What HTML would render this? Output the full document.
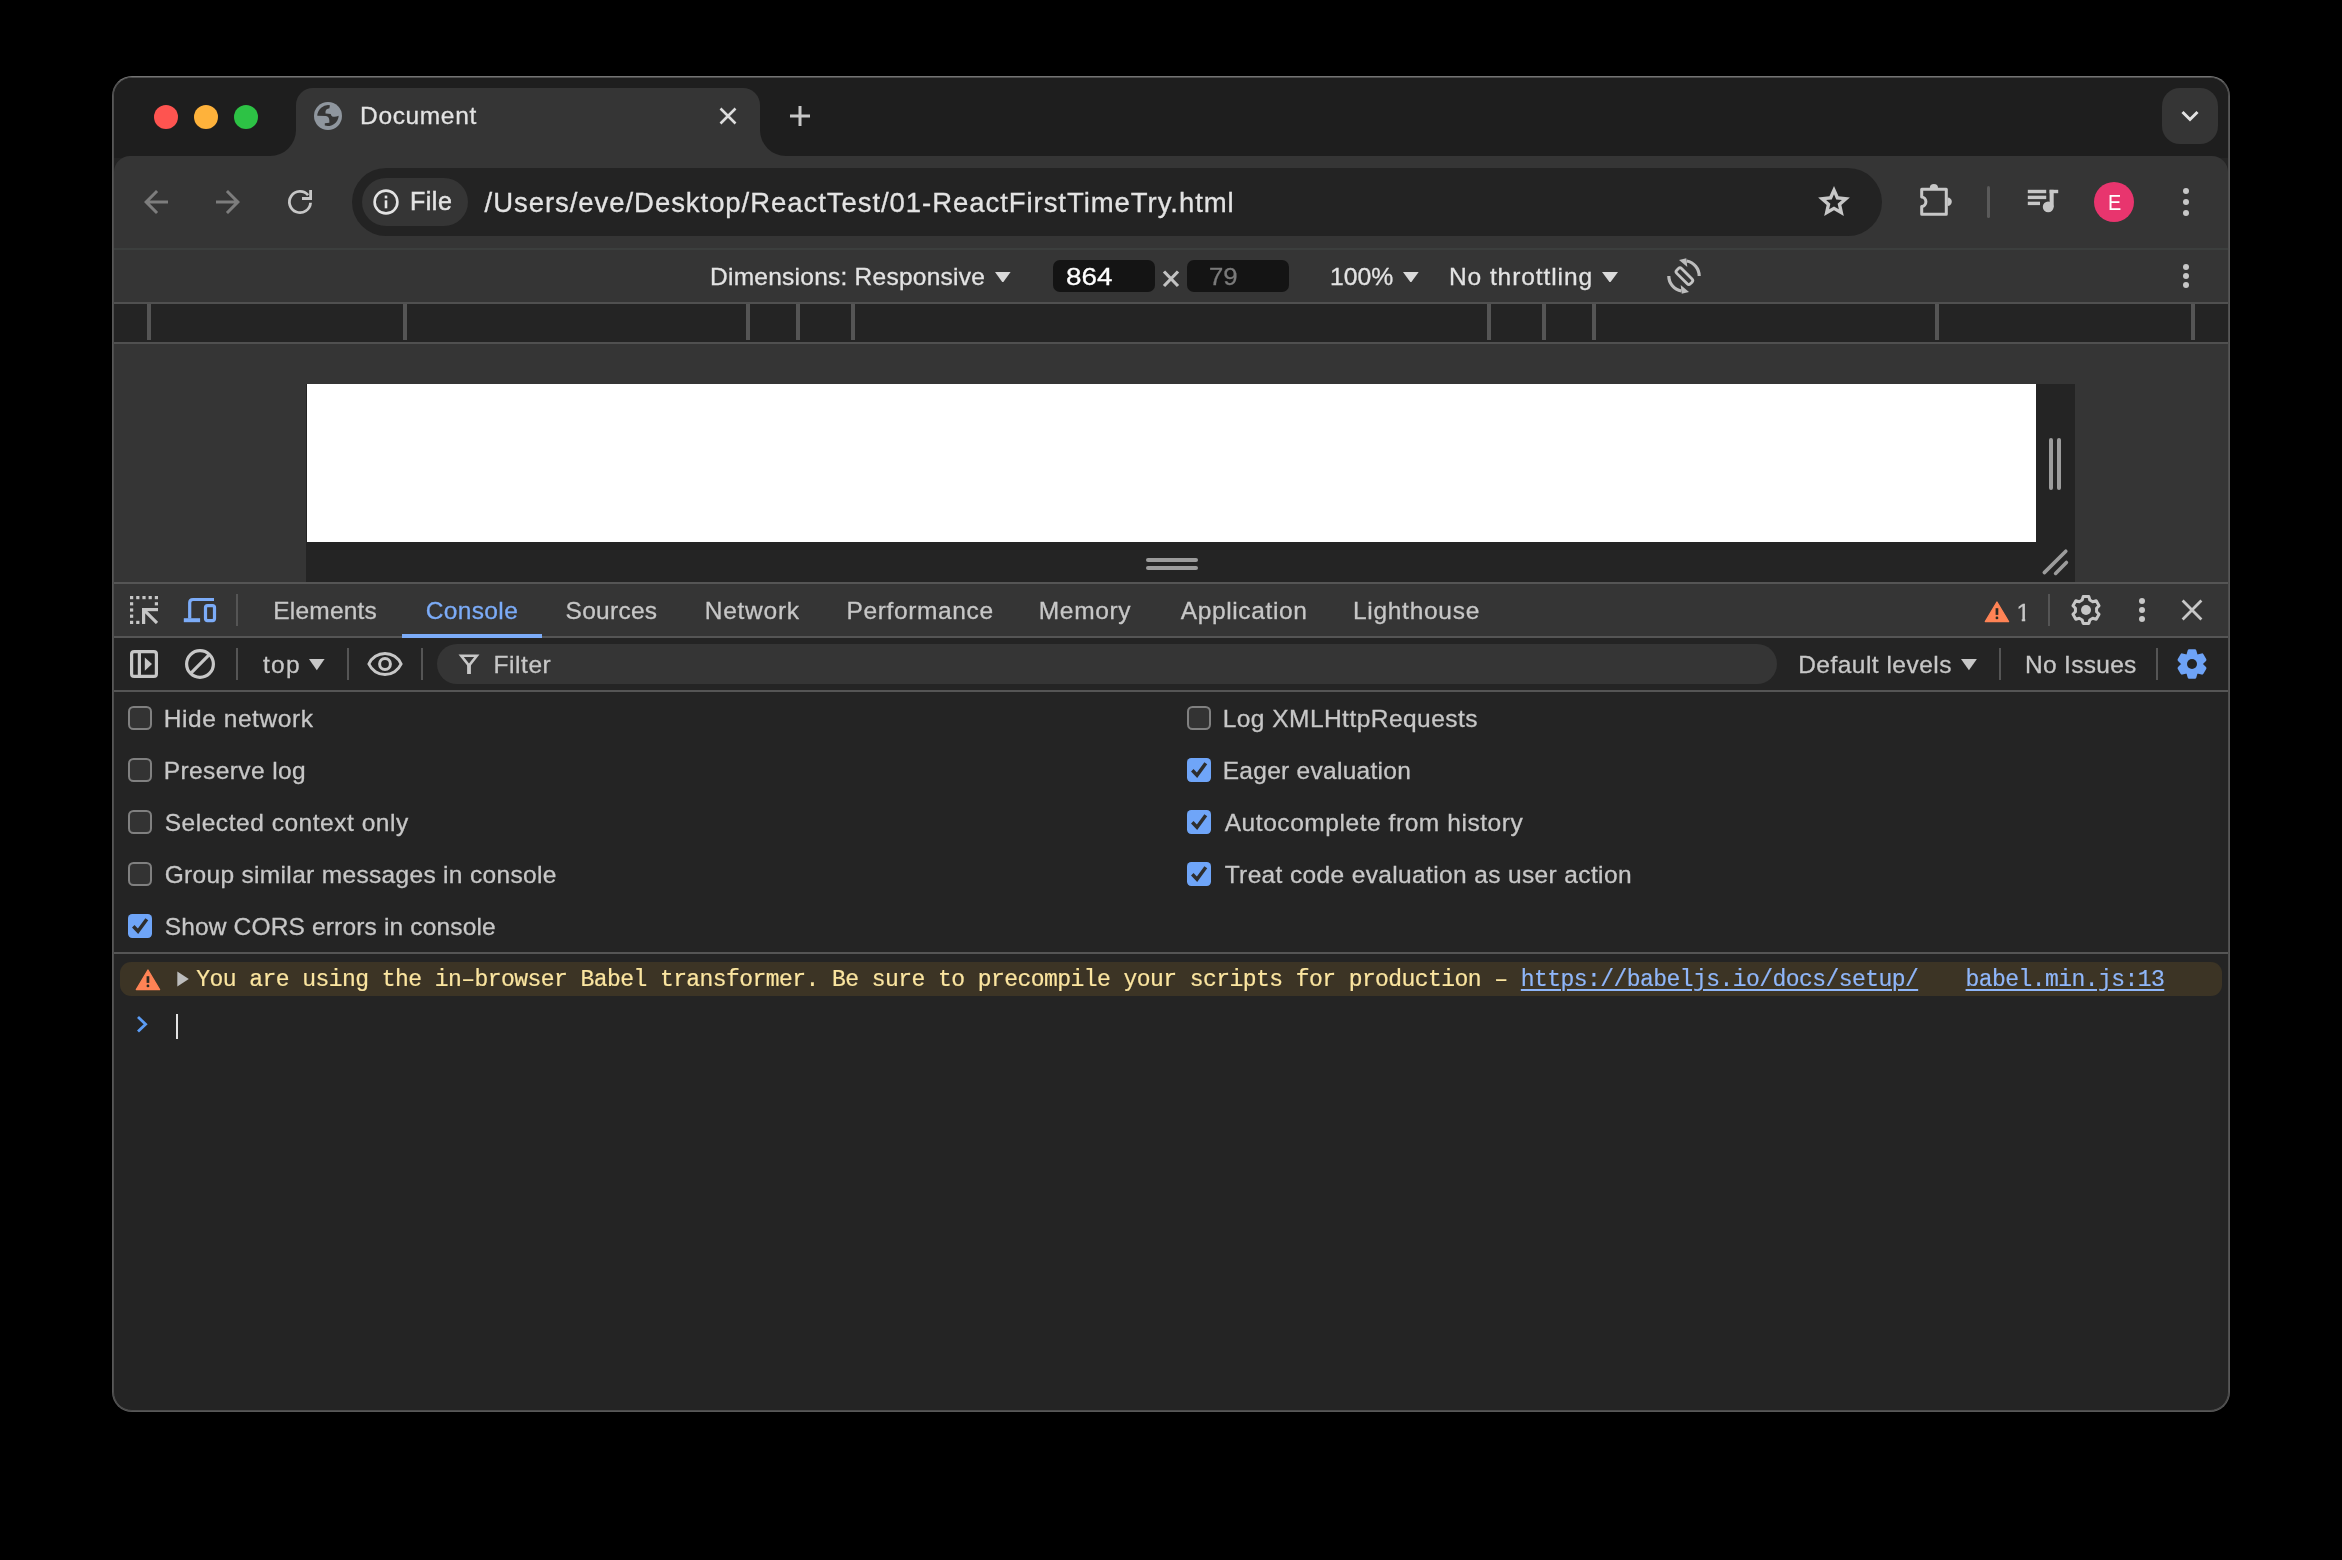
<!DOCTYPE html>
<html lang="en"><head><meta charset="utf-8"><title>Document</title>
<style>
html,body{margin:0;padding:0;background:#000;}
body{width:2342px;height:1560px;position:relative;overflow:hidden;font-family:"Liberation Sans", sans-serif;}
#win{position:absolute;left:112px;top:76px;width:2118px;height:1336px;box-sizing:border-box;border:1px solid #585858;border-top-color:#747474;border-radius:20px;overflow:hidden;background:#4d4d4d;}
#win2{position:absolute;left:0;top:0;right:0;bottom:0;box-sizing:border-box;border:1px solid #4d4d4d;border-radius:19px;overflow:hidden;background:#242424;}
#pg{will-change:transform;position:absolute;left:-114px;top:-78px;width:2342px;height:1560px;}
#pg div,#pg svg,#pg span{position:absolute;display:block;}
.t{line-height:1;white-space:pre;-webkit-text-stroke:0.3px currentColor;}
.s{font-family:"Liberation Sans", sans-serif;}
.m{font-family:"Liberation Mono", monospace;}
</style></head><body>
<div id="win"><div id="win2"><div id="pg">
<div style="left:112px;top:76px;width:2118px;height:82px;background:#1e1e1e;"></div>
<div style="left:114px;top:156px;width:2114px;height:94px;background:#353535;border-radius:16px 16px 0 0;"></div>
<svg style="left:260px;top:88px;" width="540" height="68" viewBox="260 88 540 68"><path fill="#353535" d="M270 156 A26 26 0 0 0 296 130 V105 A17 17 0 0 1 313 88 H743 A17 17 0 0 1 760 105 V130 A26 26 0 0 0 786 156 Z"/></svg>
<div style="left:154px;top:105px;width:24px;height:24px;background:#fe5450;border-radius:50%;"></div>
<div style="left:194px;top:105px;width:24px;height:24px;background:#feb23b;border-radius:50%;"></div>
<div style="left:234px;top:105px;width:24px;height:24px;background:#2dc245;border-radius:50%;"></div>
<svg style="left:314px;top:102px;" width="28" height="28" viewBox="0 0 28 28"><circle cx="14" cy="14" r="14" fill="#8f969e"/><path fill="#353535" d="M15.9 3.2 A10.9 10.9 0 0 0 3.3 13.8 L12 14 Q15 14.6 15.3 18 L15.4 20.8 L10.8 21.2 L10.8 23.6 A10.9 10.9 0 0 0 24.7 13.8 Q21 15.5 18.2 14.4 Q16.8 13.5 16.7 12 L11.5 11.6 L11.5 9.5 Q12 6.8 15.4 6.2 Z"/></svg>
<svg style="left:718px;top:106px;" width="20" height="20" viewBox="0 0 20 20"><path d="M2.5 2.5 L17.5 17.5 M17.5 2.5 L2.5 17.5" stroke="#dcdcdc" stroke-width="2.6" fill="none"/></svg>
<svg style="left:788px;top:104px;" width="24" height="24" viewBox="0 0 24 24"><path d="M12 2 V22 M2 12 H22" stroke="#c7c7c7" stroke-width="3" fill="none"/></svg>
<div style="left:2162px;top:88px;width:56px;height:56px;background:#353535;border-radius:18px;"></div>
<svg style="left:2178px;top:104px;" width="24" height="24" viewBox="0 0 24 24"><path d="M4.5 8 L12 15.5 L19.5 8" stroke="#e3e3e3" stroke-width="3" fill="none"/></svg>
<svg style="left:138px;top:184px;" width="36" height="36" viewBox="0 0 24 24"><path fill="#7d7d7d" d="M20 11H7.83l5.59-5.59L12 4l-8 8 8 8 1.41-1.41L7.83 13H20v-2z"/></svg>
<svg style="left:210px;top:184px;" width="36" height="36" viewBox="0 0 24 24"><path fill="#7d7d7d" d="M12 4l-1.41 1.41L16.17 11H4v2h12.17l-5.58 5.59L12 20l8-8z"/></svg>
<svg style="left:280px;top:182px;" width="40" height="40" viewBox="0 0 40 40"><path d="M30.57 20.74 A10.6 10.6 0 1 1 28.12 13.19" fill="none" stroke="#c7c7c7" stroke-width="2.8"/><path d="M30.6 8 V16.5 H22" fill="none" stroke="#c7c7c7" stroke-width="2.8"/></svg>
<div style="left:352px;top:168px;width:1530px;height:68px;background:#232323;border-radius:34px;"></div>
<div style="left:362px;top:178px;width:106px;height:48px;background:#353535;border-radius:24px;"></div>
<svg style="left:373px;top:189px;" width="26" height="26" viewBox="0 0 26 26"><circle cx="13" cy="13" r="11.4" fill="none" stroke="#e3e3e3" stroke-width="2.6"/><rect x="11.7" y="11.3" width="2.6" height="8" fill="#e3e3e3"/><rect x="11.7" y="6.6" width="2.6" height="2.8" fill="#e3e3e3"/></svg>
<svg style="left:1814px;top:182px;" width="40" height="40" viewBox="0 0 40 40"><polygon fill="#c7c7c7" points="20.00,3.90 24.56,14.33 35.88,15.44 27.37,22.99 29.82,34.11 20.00,28.35 10.18,34.11 12.63,22.99 4.12,15.44 15.44,14.33"/><polygon fill="#232323" points="20.00,12.30 22.23,17.53 27.89,18.04 23.61,21.77 24.88,27.31 20.00,24.40 15.12,27.31 16.39,21.77 12.11,18.04 17.77,17.53"/></svg>
<svg style="left:1916px;top:180px;" width="40" height="40" viewBox="0 0 40 40"><path fill="none" stroke="#c7c7c7" stroke-width="3" stroke-linejoin="round" d="M5.7 9.3 H30.3 V34.3 H5.7 V26.6 A4.9 4.9 0 0 0 5.7 16.9 Z"/><path d="M13.8 8 A4.1 4.1 0 0 1 22 8 Z" fill="#c7c7c7"/><path d="M31.6 17.6 A4.2 4.2 0 0 1 31.6 26 Z" fill="#c7c7c7"/></svg>
<div style="left:1986.5px;top:186px;width:3px;height:32px;background:#5a5a5a;border-radius:2px;"></div>
<svg style="left:2026px;top:186px;" width="36" height="30" viewBox="0 0 36 30"><g fill="#c7c7c7"><rect x="1.8" y="3.8" width="18.4" height="3.4"/><rect x="1.8" y="9.7" width="18.4" height="3.4"/><rect x="1.8" y="15.7" width="12.2" height="3.4"/><rect x="23.6" y="3.8" width="4.1" height="17.5"/><rect x="23.6" y="3.8" width="8.6" height="3.4"/><circle cx="22.2" cy="20.9" r="5.4"/></g></svg>
<div style="left:2094px;top:182px;width:40px;height:40px;background:#e8356e;border-radius:50%;"></div>
<div style="left:2182.8px;top:188.0px;width:6.4px;height:6.4px;background:#c7c7c7;border-radius:50%;"></div>
<div style="left:2182.8px;top:198.9px;width:6.4px;height:6.4px;background:#c7c7c7;border-radius:50%;"></div>
<div style="left:2182.8px;top:209.8px;width:6.4px;height:6.4px;background:#c7c7c7;border-radius:50%;"></div>
<div style="left:114px;top:248px;width:2114px;height:2px;background:#3c3f3e;"></div>
<div style="left:114px;top:250px;width:2114px;height:52px;background:#353535;"></div>
<svg style="left:995px;top:271.6px;" width="15.600000000000023" height="10.799999999999955" viewBox="0 0 15.600000000000023 10.799999999999955"><path fill="#dadada" d="M0 0 H15.600000000000023 L7.800000000000011 10.799999999999955 Z"/></svg>
<div style="left:1053px;top:260px;width:102px;height:32px;background:#141414;border-radius:7px;"></div>
<svg style="left:1161px;top:268px;" width="20" height="20" viewBox="0 0 20 20"><path d="M3 3.5 L17 18 M17 3.5 L3 18" stroke="#c2c2c2" stroke-width="3.2" fill="none"/></svg>
<div style="left:1187px;top:260px;width:102px;height:32px;background:#141414;border-radius:7px;"></div>
<svg style="left:1403px;top:271.6px;" width="15.700000000000045" height="10.799999999999955" viewBox="0 0 15.700000000000045 10.799999999999955"><path fill="#dadada" d="M0 0 H15.700000000000045 L7.850000000000023 10.799999999999955 Z"/></svg>
<svg style="left:1602px;top:271.6px;" width="16" height="10.799999999999955" viewBox="0 0 16 10.799999999999955"><path fill="#dadada" d="M0 0 H16 L8.0 10.799999999999955 Z"/></svg>
<svg style="left:1663.5px;top:256px;" width="40" height="40" viewBox="0 0 40 40"><rect x="-3.4" y="-9.6" width="6.8" height="19.2" rx="2.2" transform="translate(20.4,20.2) rotate(-45)" fill="none" stroke="#c4c4c4" stroke-width="2.8"/><g><path d="M22.64 5.03 A15.2 15.2 0 0 1 35.2 20" fill="none" stroke="#bdbdbd" stroke-width="3.2"/><path d="M15 3.9 L22.3 2.2 L23.3 11 Z" fill="#bdbdbd"/></g><g transform="rotate(180 20 20)"><path d="M22.64 5.03 A15.2 15.2 0 0 1 35.2 20" fill="none" stroke="#bdbdbd" stroke-width="3.2"/><path d="M15 3.9 L22.3 2.2 L23.3 11 Z" fill="#bdbdbd"/></g></svg>
<div style="left:2183px;top:264px;width:6px;height:6px;background:#c7c7c7;border-radius:50%;"></div>
<div style="left:2183px;top:272.9px;width:6px;height:6px;background:#c7c7c7;border-radius:50%;"></div>
<div style="left:2183px;top:281.8px;width:6px;height:6px;background:#c7c7c7;border-radius:50%;"></div>
<div style="left:114px;top:302px;width:2114px;height:2px;background:#505050;"></div>
<div style="left:114px;top:304px;width:2114px;height:38px;background:#242424;"></div>
<div style="left:114px;top:342px;width:2114px;height:2px;background:#505050;"></div>
<div style="left:147px;top:304px;width:4px;height:36px;background:#555555;"></div>
<div style="left:403px;top:304px;width:4px;height:36px;background:#555555;"></div>
<div style="left:746px;top:304px;width:4px;height:36px;background:#555555;"></div>
<div style="left:796px;top:304px;width:4px;height:36px;background:#555555;"></div>
<div style="left:851px;top:304px;width:4px;height:36px;background:#555555;"></div>
<div style="left:1487px;top:304px;width:4px;height:36px;background:#555555;"></div>
<div style="left:1542px;top:304px;width:4px;height:36px;background:#555555;"></div>
<div style="left:1592px;top:304px;width:4px;height:36px;background:#555555;"></div>
<div style="left:1935px;top:304px;width:4px;height:36px;background:#555555;"></div>
<div style="left:2191px;top:304px;width:4px;height:36px;background:#555555;"></div>
<div style="left:114px;top:344px;width:2114px;height:238px;background:#353535;"></div>
<div style="left:306px;top:384px;width:1769px;height:198px;background:#242424;"></div>
<div style="left:307px;top:384px;width:1729px;height:158px;background:#ffffff;"></div>
<div style="left:2049px;top:438px;width:4px;height:52px;background:#9c9c9c;border-radius:2px;"></div>
<div style="left:2057px;top:438px;width:4px;height:52px;background:#9c9c9c;border-radius:2px;"></div>
<div style="left:1146px;top:558px;width:52px;height:4px;background:#9c9c9c;border-radius:2px;"></div>
<div style="left:1146px;top:566px;width:52px;height:4px;background:#9c9c9c;border-radius:2px;"></div>
<svg style="left:2040px;top:546px;" width="32" height="32" viewBox="0 0 32 32"><path d="M4.3 26.6 L25.8 5.2 M15.6 27.4 L26.4 16.5" stroke="#9c9c9c" stroke-width="3.6" stroke-linecap="round" fill="none"/></svg>
<div style="left:114px;top:582px;width:2114px;height:2px;background:#555555;"></div>
<div style="left:114px;top:584px;width:2114px;height:52px;background:#353535;"></div>
<div style="left:114px;top:636px;width:2114px;height:2px;background:#555555;"></div>
<svg style="left:130px;top:596px;" width="28" height="28" viewBox="0 0 28 28"><g fill="#c7c7c7"><rect x="0" y="0" width="3.2" height="3.2"/><rect x="6.2" y="0" width="3.2" height="3.2"/><rect x="12.4" y="0" width="3.2" height="3.2"/><rect x="18.6" y="0" width="3.2" height="3.2"/><rect x="24.8" y="0" width="3.2" height="3.2"/><rect x="0" y="6.2" width="3.2" height="3.2"/><rect x="0" y="12.4" width="3.2" height="3.2"/><rect x="0" y="18.6" width="3.2" height="3.2"/><rect x="0" y="24.8" width="3.2" height="3.2"/><rect x="24.8" y="6.2" width="3.2" height="3.2"/><rect x="6.2" y="24.8" width="3.2" height="3.2"/><rect x="12" y="12" width="16" height="3.2"/><rect x="12" y="12" width="3.2" height="16"/><path d="M13.6 13.6 L27 27" stroke="#c7c7c7" stroke-width="3.2" fill="none"/></g></svg>
<svg style="left:182px;top:596px;" width="36" height="28" viewBox="0 0 36 28"><path d="M32 3.5 H11 Q7.7 3.5 7.7 6.8 V22.5" fill="none" stroke="#7cacf8" stroke-width="3.2"/><rect x="1.8" y="22.2" width="16.3" height="4" fill="#7cacf8"/><rect x="23.5" y="9.6" width="9" height="15" rx="2" fill="none" stroke="#7cacf8" stroke-width="3.2"/></svg>
<div style="left:236px;top:594px;width:2px;height:32px;background:#555555;"></div>
<div style="left:402px;top:634px;width:140px;height:4px;background:#7cacf8;"></div>
<svg style="left:1984.45px;top:600.86px;" width="26" height="22" viewBox="0 0 26 22"><path d="M12.95 1 L24.6 20.6 H1.3 Z" fill="#ff8355" stroke="#ff8355" stroke-width="1.3" stroke-linejoin="round"/><rect x="11.6" y="7.2" width="2.7" height="6.7" fill="#2b2a22"/><circle cx="12.95" cy="16.95" r="1.4" fill="#2b2a22"/></svg>
<div style="left:2048px;top:594px;width:2px;height:32px;background:#555555;"></div>
<svg style="left:2068px;top:592px;" width="36" height="36" viewBox="0 0 36 36"><path d="M21.83 8.01 L20.85 4.60 L15.15 4.60 L14.17 8.01 L11.27 9.68 L7.82 8.83 L4.97 13.77 L7.43 16.33 L7.43 19.67 L4.97 22.23 L7.82 27.17 L11.27 26.32 L14.17 27.99 L15.15 31.40 L20.85 31.40 L21.83 27.99 L24.73 26.32 L28.18 27.17 L31.03 22.23 L28.57 19.67 L28.57 16.33 L31.03 13.77 L28.18 8.83 L24.73 9.68 Z" fill="none" stroke="#c7c7c7" stroke-width="3" stroke-linejoin="round"/><circle cx="18" cy="18" r="5" fill="#c7c7c7"/></svg>
<div style="left:2138.8px;top:598px;width:6px;height:6px;background:#c7c7c7;border-radius:50%;"></div>
<div style="left:2138.8px;top:607px;width:6px;height:6px;background:#c7c7c7;border-radius:50%;"></div>
<div style="left:2138.8px;top:616.2px;width:6px;height:6px;background:#c7c7c7;border-radius:50%;"></div>
<svg style="left:2180px;top:598px;" width="24" height="24" viewBox="0 0 24 24"><path d="M2.6 2.6 L21.4 21.4 M21.4 2.6 L2.6 21.4" stroke="#c7c7c7" stroke-width="2.8" fill="none"/></svg>
<div style="left:114px;top:638px;width:2114px;height:52px;background:#242424;"></div>
<div style="left:114px;top:690px;width:2114px;height:2px;background:#555555;"></div>
<svg style="left:130px;top:650px;" width="28" height="28" viewBox="0 0 28 28"><rect x="1.6" y="1.6" width="24.8" height="24.8" rx="2.5" fill="none" stroke="#c7c7c7" stroke-width="3.2"/><rect x="7.8" y="2" width="3.2" height="24" fill="#c7c7c7"/><path d="M14.8 7.4 L22 14 L14.8 20.7 Z" fill="#c7c7c7"/></svg>
<svg style="left:184px;top:648px;" width="32" height="32" viewBox="0 0 32 32"><circle cx="16" cy="16" r="13.4" fill="none" stroke="#c7c7c7" stroke-width="3.2"/><path d="M6.7 25.3 L25.3 6.7" stroke="#c7c7c7" stroke-width="3.2"/></svg>
<div style="left:236px;top:648px;width:2px;height:32px;background:#555555;"></div>
<svg style="left:309.2px;top:659.4px;" width="15.600000000000023" height="11.300000000000068" viewBox="0 0 15.600000000000023 11.300000000000068"><path fill="#c7c7c7" d="M0 0 H15.600000000000023 L7.800000000000011 11.300000000000068 Z"/></svg>
<div style="left:347px;top:648px;width:2px;height:32px;background:#555555;"></div>
<svg style="left:365.1px;top:649.9px;" width="40" height="28" viewBox="-20 -14 40 28"><path d="M-16.1 0 A17.6 17.6 0 0 1 16.1 0 A17.6 17.6 0 0 1 -16.1 0 Z" fill="none" stroke="#c7c7c7" stroke-width="3" stroke-linejoin="miter"/><circle cx="0" cy="0" r="5.4" fill="none" stroke="#c7c7c7" stroke-width="3"/></svg>
<div style="left:421px;top:648px;width:2px;height:32px;background:#555555;"></div>
<div style="left:437px;top:644px;width:1340px;height:40px;background:#353535;border-radius:20px;"></div>
<svg style="left:457px;top:652px;" width="24" height="24" viewBox="0 0 24 24"><path d="M4.2 3.7 H19.8 L12 13.6 Z" fill="none" stroke="#c7c7c7" stroke-width="2.6" stroke-linejoin="miter"/><rect x="10.1" y="12" width="3.8" height="10" fill="#c7c7c7"/></svg>
<svg style="left:1960.9px;top:659.4px;" width="15.899999999999864" height="11.300000000000068" viewBox="0 0 15.899999999999864 11.300000000000068"><path fill="#c7c7c7" d="M0 0 H15.899999999999864 L7.949999999999932 11.300000000000068 Z"/></svg>
<div style="left:1999px;top:648px;width:2px;height:32px;background:#555555;"></div>
<div style="left:2156px;top:648px;width:2px;height:32px;background:#555555;"></div>
<svg style="left:2174px;top:645.85px;" width="36" height="36" viewBox="0 0 36 36"><path d="M22.33 10.34 L20.81 4.80 L15.19 4.80 L13.67 10.34 L13.53 10.42 L7.97 8.97 L5.16 13.83 L9.20 17.92 L9.20 18.08 L5.16 22.17 L7.97 27.03 L13.53 25.58 L13.67 25.66 L15.19 31.20 L20.81 31.20 L22.33 25.66 L22.47 25.58 L28.03 27.03 L30.84 22.17 L26.80 18.08 L26.80 17.92 L30.84 13.83 L28.03 8.97 L22.47 10.42 Z" fill="#6ea3f7" stroke="#6ea3f7" stroke-width="3.2" stroke-linejoin="round"/><circle cx="18" cy="18" r="5" fill="#242424"/></svg>
<div style="left:128px;top:706px;width:24px;height:24px;background:#333333;box-sizing:border-box;border:2px solid #808080;border-radius:5.5px;"></div>
<div style="left:128px;top:758px;width:24px;height:24px;background:#333333;box-sizing:border-box;border:2px solid #808080;border-radius:5.5px;"></div>
<div style="left:128px;top:810px;width:24px;height:24px;background:#333333;box-sizing:border-box;border:2px solid #808080;border-radius:5.5px;"></div>
<div style="left:128px;top:862px;width:24px;height:24px;background:#333333;box-sizing:border-box;border:2px solid #808080;border-radius:5.5px;"></div>
<svg style="left:128px;top:914px;" width="24" height="24" viewBox="0 0 24 24"><rect x="0" y="0" width="24" height="24" rx="4.2" fill="#6fa5f8"/><path d="M5.3 12.3 L10 17.2 L18.8 5.2" fill="none" stroke="#2e2e2e" stroke-width="3.5"/></svg>
<div style="left:1187px;top:706px;width:24px;height:24px;background:#333333;box-sizing:border-box;border:2px solid #808080;border-radius:5.5px;"></div>
<svg style="left:1187px;top:758px;" width="24" height="24" viewBox="0 0 24 24"><rect x="0" y="0" width="24" height="24" rx="4.2" fill="#6fa5f8"/><path d="M5.3 12.3 L10 17.2 L18.8 5.2" fill="none" stroke="#2e2e2e" stroke-width="3.5"/></svg>
<svg style="left:1187px;top:810px;" width="24" height="24" viewBox="0 0 24 24"><rect x="0" y="0" width="24" height="24" rx="4.2" fill="#6fa5f8"/><path d="M5.3 12.3 L10 17.2 L18.8 5.2" fill="none" stroke="#2e2e2e" stroke-width="3.5"/></svg>
<svg style="left:1187px;top:862px;" width="24" height="24" viewBox="0 0 24 24"><rect x="0" y="0" width="24" height="24" rx="4.2" fill="#6fa5f8"/><path d="M5.3 12.3 L10 17.2 L18.8 5.2" fill="none" stroke="#2e2e2e" stroke-width="3.5"/></svg>
<div style="left:114px;top:952px;width:2114px;height:2px;background:#555555;"></div>
<div style="left:120px;top:962px;width:2102px;height:34px;background:#3c3425;border-radius:11px;"></div>
<svg style="left:135.0px;top:968.8px;" width="26" height="22" viewBox="0 0 26 22"><path d="M12.95 1 L24.6 20.6 H1.3 Z" fill="#ff8355" stroke="#ff8355" stroke-width="1.3" stroke-linejoin="round"/><rect x="11.6" y="7.2" width="2.7" height="6.7" fill="#2b2a22"/><circle cx="12.95" cy="16.95" r="1.4" fill="#2b2a22"/></svg>
<svg style="left:177px;top:971px;" width="12" height="16" viewBox="0 0 12 16"><path d="M0.3 0.4 L11.8 8 L0.3 15.6 Z" fill="#bdbdbd"/></svg>
<svg style="left:134px;top:1013px;" width="16" height="22" viewBox="0 0 16 22"><path d="M4 4 L11.6 11.2 L4 18.4" fill="none" stroke="#5b9cf5" stroke-width="2.8"/></svg>
<div style="left:176px;top:1014px;width:2.4px;height:25px;background:#e3e3e3;"></div>
<span class="t s" style="left:360.10px;top:104.00px;font-size:24.5px;letter-spacing:0.635px;color:#e3e3e3;">Document</span>
<span class="t s" style="left:409.90px;top:189.00px;font-size:25px;letter-spacing:0.540px;color:#e3e3e3;-webkit-text-stroke:0.5px #e3e3e3;">File</span>
<span class="t s" style="left:484.60px;top:189.00px;font-size:27.5px;letter-spacing:0.948px;color:#e3e3e3;">/Users/eve/Desktop/ReactTest/01-ReactFirstTimeTry.html</span>
<span class="t s" style="left:2108.40px;top:192.00px;font-size:22px;letter-spacing:0.000px;color:#ffffff;-webkit-text-stroke:0;transform:scaleX(0.9);transform-origin:left;">E</span>
<span class="t s" style="left:710.10px;top:265.00px;font-size:24.5px;letter-spacing:0.243px;color:#e3e3e3;">Dimensions: Responsive</span>
<span class="t s" style="left:1065.56px;top:265.00px;font-size:24.5px;letter-spacing:0.000px;color:#ffffff;transform:scaleX(1.1363);transform-origin:0 0;">864</span>
<span class="t s" style="left:1208.75px;top:265.00px;font-size:24.5px;letter-spacing:0.000px;color:#7a7a7a;transform:scaleX(1.0497);transform-origin:0 0;">79</span>
<span class="t s" style="left:1329.79px;top:265.00px;font-size:24.5px;letter-spacing:0.000px;color:#e3e3e3;transform:scaleX(1.0102);transform-origin:0 0;">100%</span>
<span class="t s" style="left:1449.00px;top:265.00px;font-size:24.5px;letter-spacing:0.919px;color:#e3e3e3;">No throttling</span>
<span class="t s" style="left:273.20px;top:599.00px;font-size:24.5px;letter-spacing:0.218px;color:#c7c7c7;">Elements</span>
<span class="t s" style="left:425.70px;top:599.00px;font-size:24.5px;letter-spacing:0.373px;color:#7cacf8;">Console</span>
<span class="t s" style="left:565.60px;top:599.00px;font-size:24.5px;letter-spacing:0.262px;color:#c7c7c7;">Sources</span>
<span class="t s" style="left:704.80px;top:599.00px;font-size:24.5px;letter-spacing:0.733px;color:#c7c7c7;">Network</span>
<span class="t s" style="left:846.50px;top:599.00px;font-size:24.5px;letter-spacing:0.637px;color:#c7c7c7;">Performance</span>
<span class="t s" style="left:1038.80px;top:599.00px;font-size:24.5px;letter-spacing:0.654px;color:#c7c7c7;">Memory</span>
<span class="t s" style="left:1180.70px;top:599.00px;font-size:24.5px;letter-spacing:0.637px;color:#c7c7c7;">Application</span>
<span class="t s" style="left:1352.90px;top:599.00px;font-size:24.5px;letter-spacing:0.727px;color:#c7c7c7;">Lighthouse</span>
<span class="t s" style="left:2016.60px;top:601.00px;font-size:24.5px;letter-spacing:0.000px;color:#c7c7c7;clip-path:polygon(0 0,14px 0,14px 18px,8.6px 18px,8.6px 24.5px,5.2px 24.5px,5.2px 18px,0 18px);">1</span>
<span class="t s" style="left:262.90px;top:653.00px;font-size:24.5px;letter-spacing:1.334px;color:#c7c7c7;">top</span>
<span class="t s" style="left:493.60px;top:653.00px;font-size:24.5px;letter-spacing:0.543px;color:#c7c7c7;">Filter</span>
<span class="t s" style="left:1798.20px;top:653.00px;font-size:24.5px;letter-spacing:0.475px;color:#c7c7c7;">Default levels</span>
<span class="t s" style="left:2025.00px;top:653.00px;font-size:24.5px;letter-spacing:0.302px;color:#c7c7c7;">No Issues</span>
<span class="t s" style="left:163.70px;top:707.00px;font-size:24.5px;letter-spacing:0.570px;color:#c7c7c7;">Hide network</span>
<span class="t s" style="left:163.70px;top:759.00px;font-size:24.5px;letter-spacing:0.408px;color:#c7c7c7;">Preserve log</span>
<span class="t s" style="left:164.70px;top:811.00px;font-size:24.5px;letter-spacing:0.533px;color:#c7c7c7;">Selected context only</span>
<span class="t s" style="left:164.70px;top:863.00px;font-size:24.5px;letter-spacing:0.324px;color:#c7c7c7;">Group similar messages in console</span>
<span class="t s" style="left:164.70px;top:915.00px;font-size:24.5px;letter-spacing:0.163px;color:#c7c7c7;">Show CORS errors in console</span>
<span class="t s" style="left:1222.70px;top:707.00px;font-size:24.5px;letter-spacing:0.459px;color:#c7c7c7;">Log XMLHttpRequests</span>
<span class="t s" style="left:1222.70px;top:759.00px;font-size:24.5px;letter-spacing:0.283px;color:#c7c7c7;">Eager evaluation</span>
<span class="t s" style="left:1224.70px;top:811.00px;font-size:24.5px;letter-spacing:0.561px;color:#c7c7c7;">Autocomplete from history</span>
<span class="t s" style="left:1224.70px;top:863.00px;font-size:24.5px;letter-spacing:0.365px;color:#c7c7c7;">Treat code evaluation as user action</span>
<span class="t m" style="left:196.30px;top:969.00px;font-size:23px;letter-spacing:-0.557px;color:#fbe5a0;-webkit-text-stroke:0.2px currentColor;">You are using the in–browser Babel transformer. Be sure to precompile your scripts for production – </span>
<span class="t m" style="left:1520.80px;top:969.00px;font-size:23px;letter-spacing:-0.557px;color:#8fb6f9;-webkit-text-stroke:0.2px currentColor;text-decoration:underline;text-decoration-thickness:2px;text-underline-offset:3px;">https://babeljs.io/docs/setup/</span>
<span class="t m" style="left:1965.60px;top:969.00px;font-size:23px;letter-spacing:-0.557px;color:#8fb6f9;-webkit-text-stroke:0.2px currentColor;text-decoration:underline;text-decoration-thickness:2px;text-underline-offset:3px;">babel.min.js:13</span>
</div></div></div>
</body></html>
